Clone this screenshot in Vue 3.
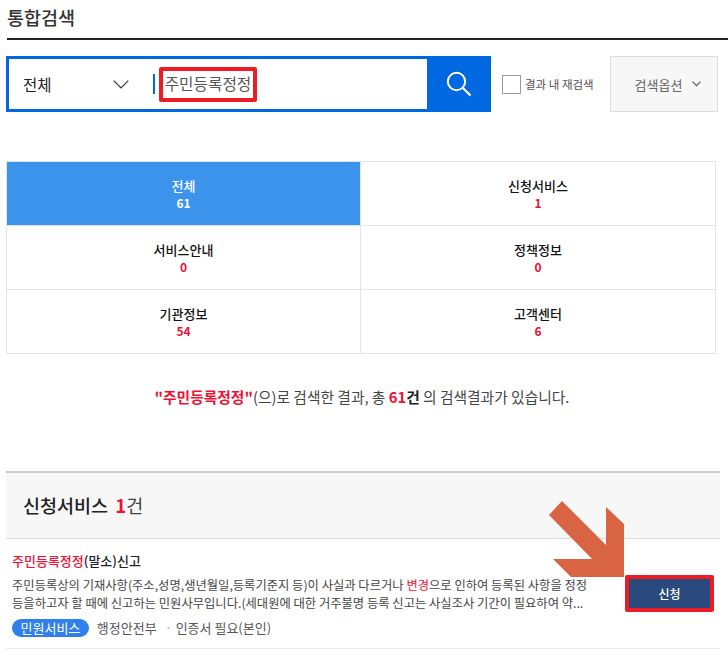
<template>
  <div class="page">
    <h1 class="title">통합검색</h1>

    <!-- Search bar -->
    <div class="search-row">
      <div class="search-box">
        <div class="select">
          <span>전체</span>
          <svg width="16" height="9" viewBox="0 0 16 9"><path d="M0.7 0.7L8 8L15.3 0.7" fill="none" stroke="#333" stroke-width="1.2" /></svg>
        </div>
        <div class="divider"></div>
        <div class="keyword">주민등록정정</div>
        <div class="search-btn">
          <svg width="26" height="26" viewBox="0 0 26 26"><circle cx="10.5" cy="10.5" r="8.7" fill="none" stroke="#fff" stroke-width="2" /><path d="M17 17L24.5 24.5" stroke="#fff" stroke-width="2.2" /></svg>
        </div>
      </div>
      <label class="recheck"><span class="check"></span>결과 내 재검색</label>
      <div class="options">
        <span>검색옵션</span>
        <svg width="9" height="6" viewBox="0 0 9 6"><path d="M0.5 0.7L4.5 4.7L8.5 0.7" fill="none" stroke="#555" stroke-width="1.1" /></svg>
      </div>
    </div>

    <!-- Category tabs -->
    <div class="tabs">
      <div v-for="t in tabs" :key="t.name" class="tab" :class="{ active: t.active }">
        <strong>{{ t.name }}</strong>
        <em>{{ t.count }}</em>
      </div>
    </div>

    <p class="summary">
      <b class="red">"주민등록정정"</b>(으)로 검색한 결과, 총 <b class="red">61</b><b>건</b> 의 검색결과가 있습니다.
    </p>

    <!-- Result section -->
    <section class="section">
      <h2 class="section-head">신청서비스 <b class="red">1</b><span>건</span></h2>
      <div class="result">
        <div class="result-body">
          <h3 class="result-title"><span class="red">주민등록정정</span>(말소)신고</h3>
          <p class="desc">주민등록상의 기재사항(주소,성명,생년월일,등록기준지 등)이 사실과 다르거나 <span class="red">변경</span>으로 인하여 등록된 사항을 정정</p>
          <p class="desc">등을하고자 할 때에 신고하는 민원사무입니다.(세대원에 대한 거주불명 등록 신고는 사실조사 기간이 필요하여 약...</p>
          <div class="meta">
            <span class="pill">민원서비스</span>
            <span>행정안전부</span>
            <i>·</i>
            <span>인증서 필요(본인)</span>
          </div>
        </div>
        <div class="apply">신청</div>
      </div>
    </section>

    <!-- annotation arrow on top of the screenshot -->
    <svg class="arrow" width="76" height="76" viewBox="0 0 76 76">
      <path d="M13 0L57 44L57 6L75 23L75 76L22 76L4 58L43 58L0 14Z" fill="#d96444" />
    </svg>
  </div>
</template>

<script setup>
const tabs = [
  { name: "전체", count: 61, active: true },
  { name: "신청서비스", count: 1 },
  { name: "서비스안내", count: 0 },
  { name: "정책정보", count: 0 },
  { name: "기관정보", count: 54 },
  { name: "고객센터", count: 6 }
];
</script>

<style>
html, body {
  margin: 0;
  background: #fff;
  overflow: hidden;
}
</style>

<style scoped>
.page {
  position: relative;
  width: 728px;
  height: 660px;
  overflow: hidden;
  font-family: "Noto Sans CJK KR", "Noto Sans", sans-serif;
  color: #222;
  box-sizing: border-box;
  padding-left: 6px;
}

.title {
  margin: 0 0 0 1px;
  height: 38px;
  border-bottom: 2px solid #222;
  font-size: 18.5px;
  font-weight: 500;
  line-height: 35px;
  color: #333;
}

.search-row {
  display: flex;
  align-items: center;
  margin-top: 16px;
  height: 56px;
}

.search-box {
  display: flex;
  align-items: center;
  width: 485px;
  height: 56px;
  box-sizing: border-box;
  border: 3px solid #0068e0;
  border-right: 0;
}

.select {
  display: flex;
  justify-content: space-between;
  align-items: center;
  width: 120px;
  padding-left: 14px;
  box-sizing: border-box;
  font-size: 15.5px;
  color: #222;
}

.divider {
  width: 2px;
  height: 20px;
  margin-left: 24px;
  background: #0068e0;
}

.keyword {
  width: 98px;
  height: 35px;
  margin-left: 4px;
  box-sizing: border-box;
  border: 4px solid #ed1c24;
  border-radius: 2px;
  font-size: 15.7px;
  line-height: 26px;
  color: #555;
  text-align: center;
  white-space: nowrap;
}

.search-btn {
  display: flex;
  align-items: center;
  justify-content: center;
  width: 64px;
  height: 56px;
  margin: 0 0 0 auto;
  background: #0068e0;
}

.recheck {
  display: flex;
  align-items: center;
  gap: 4px;
  margin-left: 11px;
  font-size: 11.5px;
  color: #555;
}

.check {
  width: 19px;
  height: 19px;
  box-sizing: border-box;
  border: 1px solid #999;
  background: #fff;
}

.options {
  display: flex;
  align-items: center;
  justify-content: center;
  gap: 10px;
  width: 108px;
  height: 56px;
  margin-left: auto;
  margin-right: 10px;
  padding-left: 8px;
  box-sizing: border-box;
  border: 1px solid #ddd;
  background: #f7f7f7;
  font-size: 13px;
  color: #666;
}

.tabs {
  display: grid;
  grid-template-columns: 354px 355px;
  grid-auto-rows: 64px;
  width: 710px;
  margin: 49px 0 0;
  box-sizing: border-box;
  border-left: 1px solid #e5e5e5;
  border-bottom: 1px solid #e5e5e5;
}

.tab {
  display: flex;
  flex-direction: column;
  align-items: center;
  justify-content: center;
  box-sizing: border-box;
  border-top: 1px solid #e5e5e5;
  border-right: 1px solid #e5e5e5;
  font-size: 13px;
  line-height: 17px;
}

.tab strong {
  font-weight: 500;
  color: #111;
}

.tab em {
  font-style: normal;
  font-weight: 700;
  font-size: 12px;
  color: #ee1133;
}

.tab.active {
  background: #3b93ec;
}

.tab.active strong,
.tab.active em {
  color: #fff;
}

.summary {
  margin: 33px 0 0;
  padding-right: 10px;
  text-align: center;
  font-size: 14.75px;
  line-height: 20px;
  color: #444;
}

.summary b {
  color: #222;
}

.red,
.summary b.red {
  color: #ee1133;
}

.section {
  margin-top: 64px;
  width: 714px;
  margin-left: 0;
}

.section-head {
  margin: 0;
  height: 68px;
  padding-left: 17px;
  box-sizing: border-box;
  border-top: 2px solid #ccc;
  border-bottom: 1px solid #ddd;
  background: #f7f7f7;
  font-size: 18.5px;
  font-weight: 500;
  line-height: 64px;
  color: #222;
}

.section-head b {
  margin-left: 3px;
}

.section-head span {
  font-weight: 400;
  color: #444;
}

.result {
  display: flex;
  align-items: flex-start;
  height: 110px;
  padding-left: 6px;
  box-sizing: border-box;
  border-bottom: 1px solid #e8e8e8;
}

.result-body {
  width: 607px;
  white-space: nowrap;
}

.result-title {
  margin: 13px 0 6px;
  font-size: 13px;
  font-weight: 500;
  line-height: 18px;
  color: #222;
}

.desc {
  margin: 0;
  font-size: 12.3px;
  line-height: 18px;
  color: #444;
}

.meta {
  display: flex;
  align-items: center;
  gap: 8px;
  margin-top: 6px;
  font-size: 13px;
  color: #555;
}

.meta i {
  width: 3px;
  font-style: normal;
  text-align: center;
  color: #aaa;
}

.pill {
  padding: 0 8.5px;
  height: 18px;
  line-height: 17px;
  border-radius: 9px;
  background: #2f80ed;
  color: #fff;
}

.apply {
  width: 89px;
  height: 37px;
  margin: 36px 0 0 6px;
  box-sizing: border-box;
  border: 4px solid #ed1c24;
  border-radius: 2px;
  background: #2a4a7e;
  color: #fff;
  font-size: 12px;
  font-weight: 500;
  line-height: 29px;
  text-align: center;
}

.arrow {
  position: absolute;
  left: 549px;
  top: 501px;
}
</style>
